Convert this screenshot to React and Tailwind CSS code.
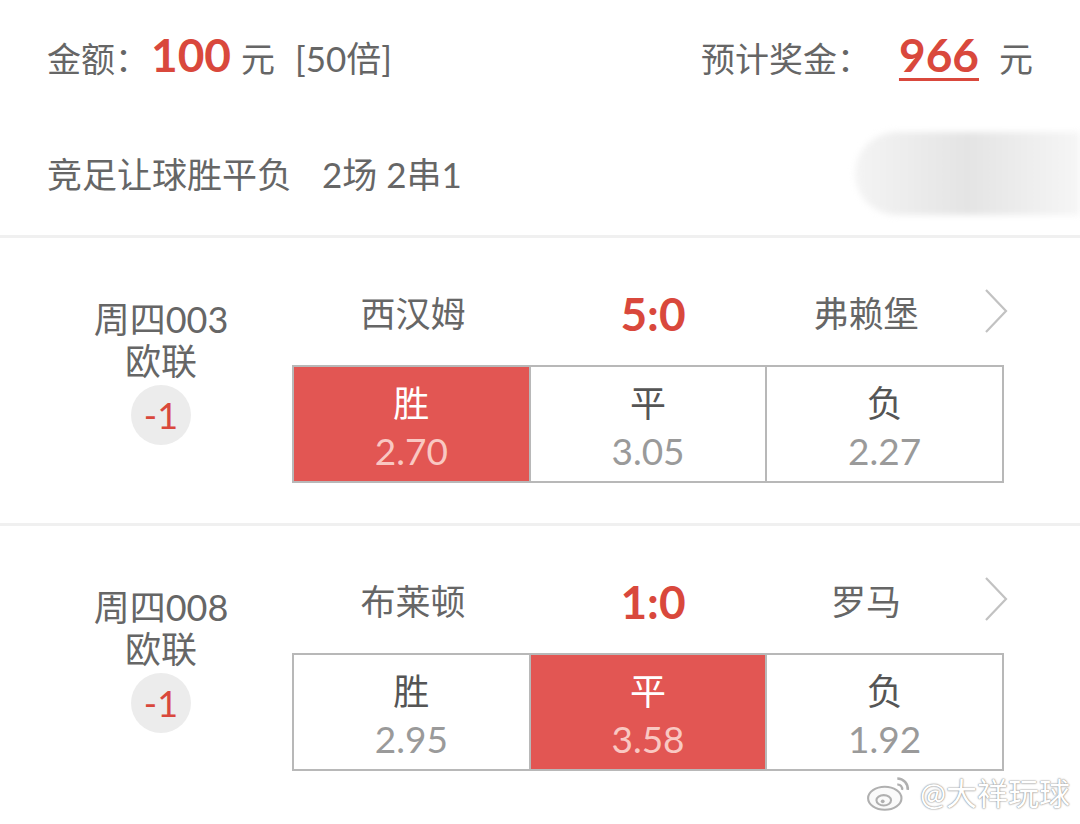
import React from "react";

const FONT = { fontFamily: 'Lato, "Noto Sans CJK SC", sans-serif' };

function Chevron() {
  return (
    <svg width="26" height="46" viewBox="0 0 26 46" className="shrink-0">
      <path d="M3 2 L23 23 L3 44" fill="none" stroke="#c2c2c2" strokeWidth="2.2" />
    </svg>
  );
}

function Cell({ label, odds, selected, last }) {
  return (
    <div
      className={
        "flex-1 flex flex-col items-center pt-[14px] " +
        (last ? "" : "border-r-2 border-[#b8b8b8] ") +
        (selected ? "bg-[#e25653]" : "bg-white")
      }
    >
      <div className={"text-[36px] leading-[44px] " + (selected ? "text-white" : "text-[#555]")}>{label}</div>
      <div className={"text-[37px] leading-[48px] mt-[2px] " + (selected ? "text-[#f9c8c2]" : "text-[#9a9a9a]")}>{odds}</div>
    </div>
  );
}

function Match({ code, league, home, score, away, odds, sel }) {
  return (
    <div className="flex h-[285px]">
      <div className="w-[292px] pl-[30px] flex flex-col items-center pt-[60px]">
        <div className="text-[36px] leading-[42px] text-[#666]">{code}</div>
        <div className="text-[36px] leading-[42px] text-[#666]">{league}</div>
        <div className="mt-[3px] w-[60px] h-[60px] rounded-full bg-[#ececec] flex items-center justify-center text-[36px] text-[#d9483c]">
          -1
        </div>
      </div>
      <div className="flex flex-col">
        <div className="flex items-center h-[76px] mt-[37px]">
          <div className="w-[242px] text-center text-[35px] text-[#666]">{home}</div>
          <div className="w-[238px] text-center text-[46px] font-bold text-[#d9483c]">{score}</div>
          <div className="w-[188px] text-center text-[35px] text-[#666]">{away}</div>
          <div className="ml-[23px] mt-[-4px]">
            <Chevron />
          </div>
        </div>
        <div className="mt-[14px] w-[712px] h-[118px] border-2 border-[#b8b8b8] flex">
          <Cell label="胜" odds={odds[0]} selected={sel === 0} />
          <Cell label="平" odds={odds[1]} selected={sel === 1} />
          <Cell label="负" odds={odds[2]} selected={sel === 2} last />
        </div>
      </div>
    </div>
  );
}

export default function App() {
  return (
    <div className="w-[1080px] h-[824px] bg-white overflow-hidden relative" style={FONT}>
      <div className="px-[47px]">
        <div className="h-[114px] flex items-center justify-between pb-[6px]">
          <div className="flex items-baseline text-[#666]">
            <span className="text-[34px]">金额：</span>
            <span className="text-[46px] font-bold text-[#d9483c] ml-[2px]">100</span>
            <span className="text-[34px] ml-[10px]">元</span>
            <span className="text-[35px] ml-[20px]">[50倍]</span>
          </div>
          <div className="flex items-baseline text-[#666]">
            <span className="text-[34px]">预计奖金：</span>
            <span className="text-[46px] font-bold text-[#d9483c] ml-[28px] underline decoration-[3px] underline-offset-[6px]">966</span>
            <span className="text-[34px] ml-[20px]">元</span>
          </div>
        </div>
        <div className="h-[121px] flex items-center justify-between">
          <div className="flex items-baseline text-[35px] text-[#666]">
            <span>竞足让球胜平负</span>
            <span className="ml-[30px] whitespace-pre">2场 2串1</span>
          </div>
          <div className="mr-[-47px] mt-[-2px] w-[225px] h-[83px] rounded-l-full bg-gradient-to-r from-[#f4f4f4] via-[#e4e4e4] to-[#f6f6f6] blur-[3px]" />
        </div>
      </div>
      <div className="h-[3px] bg-[#f0f0f0]" />
      <Match code="周四003" league="欧联" home="西汉姆" score="5:0" away="弗赖堡" odds={["2.70", "3.05", "2.27"]} sel={0} />
      <div className="h-[3px] bg-[#f0f0f0]" />
      <Match code="周四008" league="欧联" home="布莱顿" score="1:0" away="罗马" odds={["2.95", "3.58", "1.92"]} sel={1} />
      <div className="absolute right-[10px] bottom-[8px] flex items-center gap-[6px]">
        <svg width="48" height="38" viewBox="0 0 46 36">
          <ellipse cx="18" cy="23" rx="16" ry="11" fill="#fafafa" stroke="#b0b0b0" strokeWidth="2" />
          <ellipse cx="17" cy="25" rx="7" ry="5" fill="none" stroke="#b0b0b0" strokeWidth="2" />
          <circle cx="16" cy="26" r="1.8" fill="#b0b0b0" />
          <path d="M30 4 a10 10 0 0 1 10 11" fill="none" stroke="#b0b0b0" strokeWidth="2.4" />
          <path d="M30 10 a4 4 0 0 1 4.5 5" fill="none" stroke="#b0b0b0" strokeWidth="2.2" />
        </svg>
        <span
          className="text-[31px] text-white"
          style={{ textShadow: "0 0 2px #888, 0 0 1px #888" }}
        >
          @大祥玩球
        </span>
      </div>
    </div>
  );
}
